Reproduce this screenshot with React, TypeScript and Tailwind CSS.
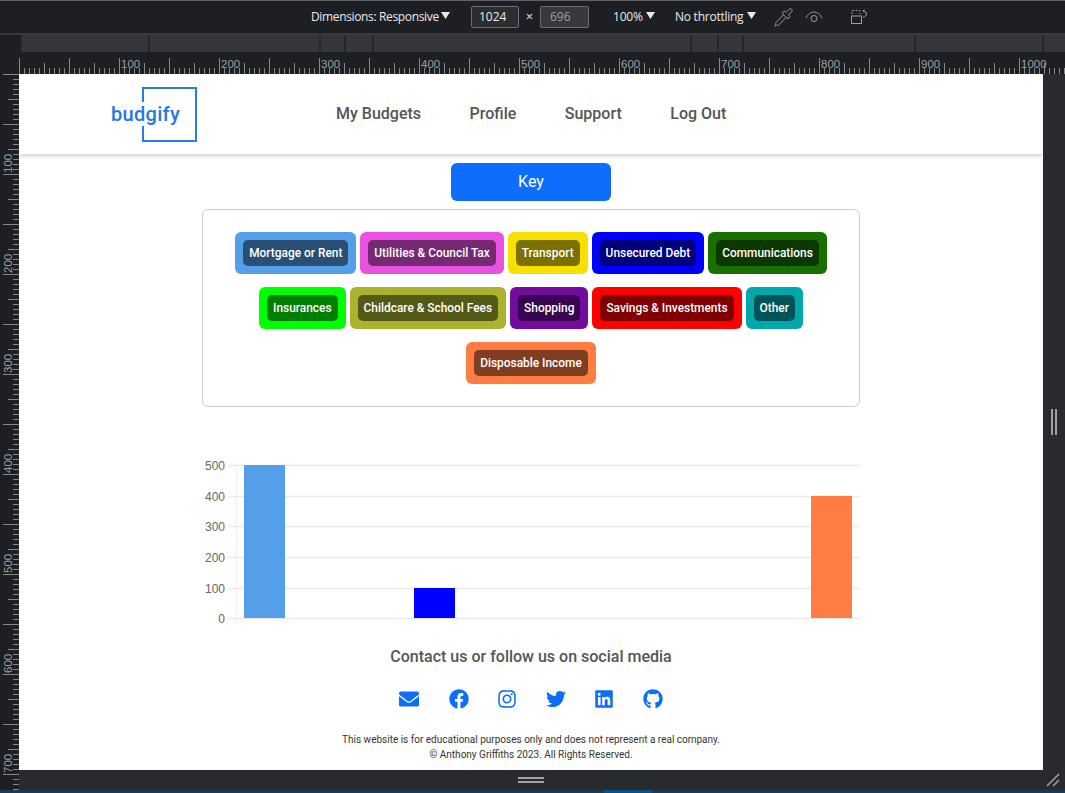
import { Pipette } from 'lucide-react';
import { FaEnvelope, FaFacebook, FaGithub, FaInstagram, FaLinkedin, FaTwitter } from 'react-icons/fa';

const chips = [
  { label: 'Mortgage or Rent', bg: 'bg-[#549fe8]' },
  { label: 'Utilities & Council Tax', bg: 'bg-[#e952e0]' },
  { label: 'Transport', bg: 'bg-[#f7e000]' },
  { label: 'Unsecured Debt', bg: 'bg-[#0000ff]' },
  { label: 'Communications', bg: 'bg-[#187000]' },
  { label: 'Insurances', bg: 'bg-[#00ff00]' },
  { label: 'Childcare & School Fees', bg: 'bg-[#abb32e]' },
  { label: 'Shopping', bg: 'bg-[#710c9c]' },
  { label: 'Savings & Investments', bg: 'bg-[#ff0000]' },
  { label: 'Other', bg: 'bg-[#00a8ac]' },
  { label: 'Disposable Income', bg: 'bg-[#ff7d42]' },
];

const mediaBar = [128, 171, 25, 28, 318, 27, 25, 172, 128];
const socials = [FaFacebook, FaInstagram, FaTwitter, FaLinkedin, FaGithub];

function Caret() {
  return (
    <svg width="9" height="7" viewBox="0 0 9 7" className="mb-1">
      <path d="M0 0h9L4.5 7z" fill="#e8eaed" />
    </svg>
  );
}

function Toolbar() {
  return (
    <div className="h-[35px] bg-[#1e1f22] border-t border-t-[#5f6368] border-b-2 border-b-[#38393c] flex items-center pl-[311px] text-[12px] text-[#e8eaed] font-['Open_Sans',sans-serif]">
      <span className="w-[127px] whitespace-nowrap tracking-[-0.35px]">Dimensions: Responsive</span>
      <span className="ml-[3px]"><Caret /></span>
      <div className="ml-[21px] w-[48px] h-[22px] border border-[#6b6d70] bg-[#2c2d30] rounded-[2px] pl-[7px] leading-[20px] text-[12px]">1024</div>
      <span className="w-[21px] text-center text-[13px]">×</span>
      <div className="w-[49px] h-[22px] border border-[#6b6d70] bg-[#38393c] rounded-[2px] pl-[9px] leading-[20px] text-[12px] text-[#9aa0a6]">696</div>
      <span className="ml-[24px] w-[29px] tracking-[-0.2px]">100%</span>
      <span className="ml-[4px]"><Caret /></span>
      <span className="ml-[20px] w-[69px] whitespace-nowrap tracking-[-0.25px]">No throttling</span>
      <span className="ml-[3px]"><Caret /></span>
      <Pipette size={21} strokeWidth={1.1} className="ml-[17px] text-[#9aa0a6]" />
      <svg width="18" height="12" viewBox="0 0 18 12" fill="none" stroke="#9aa0a6" strokeWidth="1" className="ml-[11px]">
        <path d="M1 7C3 3 6 1 9 1s6 2 8 6" />
        <circle cx="9" cy="7.5" r="3" />
      </svg>
      <svg width="18" height="16" viewBox="0 0 18 16" fill="none" stroke="#9aa0a6" strokeWidth="1" className="ml-[27px]">
        <path d="M2 5V1.5h8V5" strokeDasharray="2 1.5" />
        <rect x="1.5" y="7" width="10" height="7.5" />
        <path d="M13 2c2.500 0 3.500 1.500 3.500 3S15 8 13 8M14.500 0.500L13 2l1.500 1.500" />
      </svg>
    </div>
  );
}

function MediaBar() {
  return (
    <div className="h-[17px] bg-[#1e1f22] flex pl-[20px]">
      {mediaBar.map((w, i) => (
        <div key={i} className="bg-[#35363a] h-full border-l-2 border-l-[#26272a]" style={{ width: w }} />
      ))}
      <div className="bg-[#35363a] h-full flex-1 border-l-2 border-l-[#26272a]" />
    </div>
  );
}

function TopRuler() {
  const marks = [];
  for (let v = 0; v <= 1045; v += 5) marks.push(v);
  return (
    <svg width="1065" height="22" viewBox="0 0 1065 22" className="block bg-[#1e1f22]">
      {marks.map((v) => {
        const top = v % 50 === 0 ? 6 : v % 25 === 0 ? 11 : 16;
        return <line key={v} x1={v + 19.5} x2={v + 19.5} y1={top} y2={22} stroke="#85878b" />;
      })}
      {[100, 200, 300, 400, 500, 600, 700, 800, 900, 1000].map((v) => (
        <text key={v} x={v + 21} y={16} fontSize="11.500" fill="#9aa0a6" fontFamily="'Liberation Sans', sans-serif">{v}</text>
      ))}
    </svg>
  );
}

function LeftRuler() {
  const marks = [];
  for (let v = 0; v <= 715; v += 5) marks.push(v);
  return (
    <svg width="19" height="716" viewBox="0 0 19 716" className="block bg-[#1e1f22] shrink-0">
      {marks.map((v) => {
        const left = v % 50 === 0 ? 3 : v % 25 === 0 ? 8 : 13;
        return <line key={v} x1={left} x2={19} y1={v + 0.5} y2={v + 0.5} stroke="#85878b" />;
      })}
      {[100, 200, 300, 400, 500, 600, 700].map((v) => (
        <text key={v} transform={`translate(12 ${v - 1}) rotate(-90)`} fontSize="11.500" fill="#9aa0a6" fontFamily="'Liberation Sans', sans-serif">{v}</text>
      ))}
    </svg>
  );
}

function Nav() {
  return (
    <header className="h-[80px] shrink-0 flex items-center bg-white shadow-[0_2px_4px_rgba(0,0,0,0.18)]">
      <div className="relative ml-[123px] w-[55px] h-[55px] border-2 border-[#2a7de1]">
        <span className="absolute -left-[33px] top-[13px] bg-white h-[24px] leading-[24px] text-[20px] font-medium tracking-[0.3px] text-[#1f78e6]">budgify</span>
      </div>
      <nav className="ml-[139px] flex gap-[48.5px] text-[16px] font-medium text-[#555555] -mt-[1px]">
        <a>My Budgets</a>
        <a>Profile</a>
        <a>Support</a>
        <a>Log Out</a>
      </nav>
    </header>
  );
}

function Chart() {
  const grid = [465, 496, 526, 557, 588, 618];
  const labels = ['500', '400', '300', '200', '100', '0'];
  return (
    <svg width="682" height="170" viewBox="190 457 682 170" className="block mt-[50px] shrink-0">
      <line x1="236.500" x2="236.500" y1="465" y2="623" stroke="#eeeeee" />
      {grid.map((y, i) => (
        <g key={y}>
          <line x1="228" x2="860" y1={y + 0.5} y2={y + 0.5} stroke="#eaeaea" strokeWidth="1.500" />
          <text x="225" y={y + 4.5} textAnchor="end" fontSize="12" fill="#666666" fontFamily="'Liberation Sans', sans-serif">{labels[i]}</text>
        </g>
      ))}
      <rect x="244" y="465" width="41" height="153" fill="#549fe8" />
      <rect x="414" y="588" width="41" height="30" fill="#0000ff" />
      <rect x="811" y="496" width="41" height="122" fill="#ff7d42" />
    </svg>
  );
}

function Page() {
  return (
    <main className="w-[1024px] h-[696px] shrink-0 bg-white overflow-hidden flex flex-col font-['Roboto',sans-serif]">
      <Nav />
      <div className="flex flex-col items-center">
        <button className="mt-[9px] w-[160px] h-[38px] rounded-[6px] bg-[#0d6efd] text-white text-[16px]">Key</button>
        <section className="mt-[8px] w-[658px] h-[198px] border border-[#cfcfcf] rounded-[6px] pt-[22px] px-[24px] flex flex-wrap justify-center content-start gap-x-1 gap-y-[13px]">
          {chips.map((c) => (
            <div key={c.label} className={`${c.bg} h-[42px] rounded-[6px] p-2`}>
              <div className="h-[26px] bg-black/50 rounded-[5px] px-[6px] leading-[26px] text-[11.9px] font-medium text-white whitespace-nowrap">{c.label}</div>
            </div>
          ))}
        </section>
        <Chart />
        <h2 className="mt-[18px] h-[24px] leading-[24px] text-[16px] font-medium text-[#555555]">Contact us or follow us on social media</h2>
        <div className="mt-[20px] flex gap-[28.5px] text-[#0d6efd]">
          <FaEnvelope size={20} className="mr-[1px]" />
          {socials.map((Icon, i) => <Icon key={i} size={20} />)}
        </div>
        <p className="mt-[23px] text-center text-[10px] leading-[15px] text-[#333333]">
          This website is for educational purposes only and does not represent a real company.
          <br />© Anthony Griffiths 2023. All Rights Reserved.
        </p>
      </div>
    </main>
  );
}

export default function App() {
  return (
    <div className="w-[1065px] h-[793px] overflow-hidden bg-[#1e1f22] flex flex-col">
      <Toolbar />
      <MediaBar />
      <TopRuler />
      <div className="flex">
        <LeftRuler />
        <div className="flex-1 flex flex-col">
          <div className="flex">
            <Page />
            <div className="flex-1 bg-[#292a2d] flex items-center justify-center">
              <div className="w-[6px] h-[26px] border-x-2 border-x-[#a0a2a5]" />
            </div>
          </div>
          <div className="h-[20px] bg-[#292a2d] flex items-center relative">
            <div className="ml-[499px] w-[26px] h-[6px] border-y-2 border-y-[#a0a2a5]" />
            <svg width="14" height="14" viewBox="0 0 14 14" className="absolute right-[5px] top-[3px]" stroke="#a0a2a5" strokeWidth="1.500">
              <path d="M1 13L13 1M7 13l6-6" />
            </svg>
          </div>
        </div>
      </div>
      <div className="flex-1 bg-[#1d3a50] flex">
        <div className="ml-[604px] w-[48px] bg-[#0f4f80]" />
      </div>
    </div>
  );
}
